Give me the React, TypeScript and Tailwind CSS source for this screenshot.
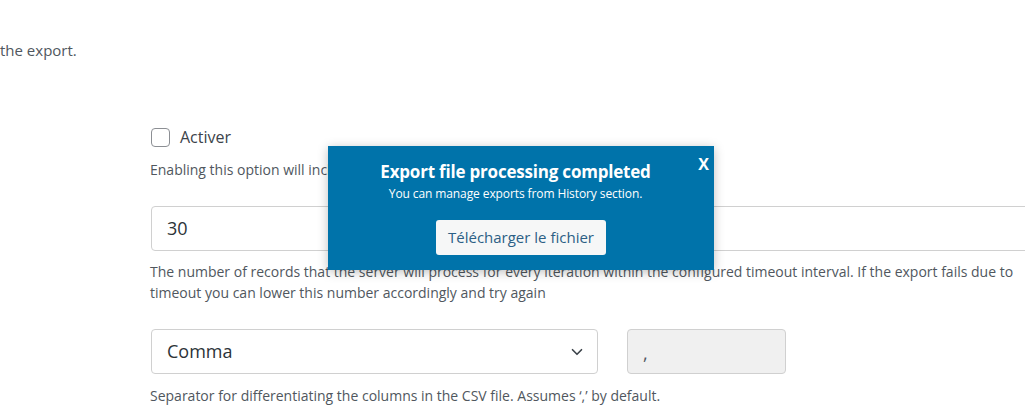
import { ChevronDown } from "lucide-react";

export default function App() {
  return (
    <div
      className="relative h-[409px] w-[1025px] overflow-hidden bg-white text-[#50575e]"
      style={{ fontFamily: '"Open Sans", "Noto Sans", sans-serif' }}
    >
      {/* intro line */}
      <p className="pt-[40px] text-[15px] leading-5 text-[#50575e]">the export.</p>

      <div className="ml-[150px] mt-[65px] w-[1000px]">
        {/* checkbox */}
        <label className="flex items-center gap-[10px]">
          <span className="ml-px h-[19px] w-[19px] rounded-[4px] border border-[#8c8f94] bg-white" />
          <span className="text-[16px] leading-6 text-[#3c434a]">Activer</span>
        </label>
        <p className="mt-[11px] text-[14px] leading-5">
          Enabling this option will include the selected fields in the export.
        </p>

        {/* records per iteration */}
        <div className="ml-px mt-[26px] flex h-[45px] w-[960px] items-center rounded-[4px] border border-[#d0d0d0] px-[15px] text-[18px] text-[#2c3338]">
          30
        </div>
        <p className="mt-[10px] w-[880px] text-[14px] leading-[21px]">
          The number of records that the server will process for every iteration within the configured timeout interval. If the export fails due to timeout you can lower this number accordingly and try again
        </p>

        {/* separator */}
        <div className="ml-px mt-[26px] flex items-center gap-[29px]">
          <div className="flex h-[45px] w-[447px] items-center justify-between rounded-[4px] border border-[#d0d0d0] pl-[15px] pr-[11px] text-[18px] text-[#2c3338]">
            <span>Comma</span>
            <ChevronDown className="h-[18px] w-[18px] text-[#3c434a]" strokeWidth={2.2} />
          </div>
          <div className="flex h-[45px] w-[159px] items-center rounded-[4px] border border-[#d0d0d0] bg-[#f0f0f0] px-[15px] pt-[4px] text-[18px] text-[#50575e]">
            ,
          </div>
        </div>
        <p className="mt-[12px] text-[14px] leading-5">
          Separator for differentiating the columns in the CSV file. Assumes ‘,’ by default.
        </p>
      </div>

      {/* notification overlay */}
      <div className="absolute left-[328px] top-[146px] flex h-[124px] w-[386px] flex-col items-center bg-[#0073aa] pt-[14px] text-white shadow-[0_2px_10px_rgba(0,0,0,0.25)]">
        <button className="absolute right-[5px] top-[8px] text-[16px] font-bold leading-5 text-white">X</button>
        <h2 className="mr-[11px] text-[17px] font-bold leading-6 tracking-[-0.2px]">Export file processing completed</h2>
        <p className="mr-[11px] mt-[2px] text-[12px] leading-4 tracking-[-0.1px]">You can manage exports from History section.</p>
        <button className="mt-[18px] h-[35px] rounded-[3px] bg-[#f6f7f7] px-[12px] text-[15px] text-[#2c5f85]">
          Télécharger le fichier
        </button>
      </div>
    </div>
  );
}
